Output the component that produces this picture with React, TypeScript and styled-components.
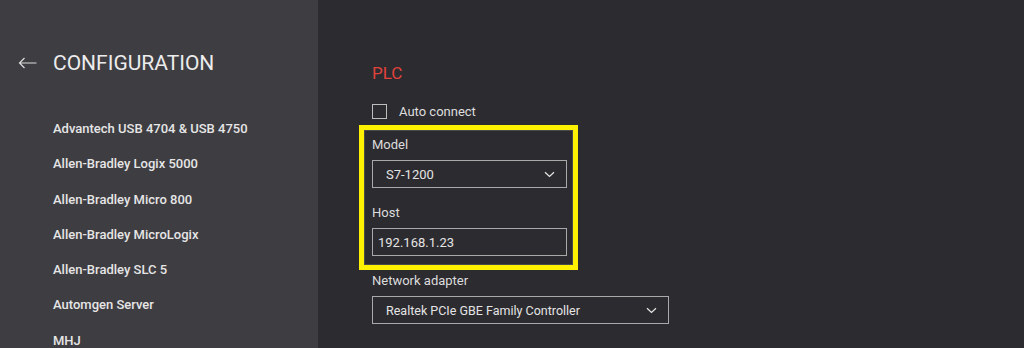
import React from "react";
import styled, {createGlobalStyle} from "styled-components";

const GlobalStyle = createGlobalStyle`
    html, body {
        margin: 0;
        padding: 0;
        background: #2c2b30;
        font-family: Roboto, "Liberation Sans", sans-serif;
    }
`;

const Page = styled.div`
    display: flex;
    width: 1024px;
    height: 348px;
    overflow: hidden;
    background: #2c2b30;
`;

const Sidebar = styled.aside`
    width: 318px;
    flex-shrink: 0;
    background: #3e3d42;
    padding: 52px 0 0 18px;
    box-sizing: border-box;
`;

const Header = styled.div`
    display: flex;
    align-items: center;
    height: 22px;
    color: #ececec;
    font-size: 21px;
    svg {
        margin-right: 16px;
    }
`;

const List = styled.ul`
    list-style: none;
    margin: 47px 0 0 35px;
    padding: 0;
`;

const Item = styled.li`
    color: #e6e6e6;
    font-size: 13px;
    font-weight: 500;
    height: 35.3px;
    line-height: 15px;
`;

const Main = styled.main`
    flex: 1;
    padding: 64px 0 0 54px;
`;

const Title = styled.h2`
    margin: 0;
    color: #e0433c;
    font-size: 17px;
    font-weight: 400;
    line-height: 18px;
`;

const CheckRow = styled.label`
    display: flex;
    align-items: center;
    margin-top: 21px;
    color: #dedede;
    font-size: 13px;
    height: 16px;
`;

const Box = styled.span`
    width: 13px;
    height: 13px;
    border: 1.5px solid #bdbdbd;
    margin-right: 12px;
`;

const Highlight = styled.div`
    width: 209px;
    margin: 6px 0 0 -13px;
    border: 5px solid #fff200;
    box-sizing: content-box;
`;

const HighlightInner = styled.div`
    border: 1px solid #4a4a4a;
    padding: 6px 6px 8px 7px;
`;

const Field = styled.div<{ $top?: number }>`
    margin-top: ${props => props.$top || 0}px;
`;

const Label = styled.div`
    color: #dcdcdc;
    font-size: 13px;
    line-height: 15px;
    margin-bottom: 8px;
`;

const Control = styled.div<{ $width: number; $size?: number }>`
    display: flex;
    align-items: center;
    justify-content: space-between;
    width: ${props => props.$width}px;
    height: 28px;
    box-sizing: border-box;
    border: 1px solid #a9a9a9;
    color: #e4e4e4;
    font-size: ${props => props.$size || 13}px;
    padding: 0 11px 0 13px;
`;

const HostControl = styled(Control)`
    padding-left: 5px;
`;

const Chevron = () => (
    <svg width="11" height="7" viewBox="0 0 11 7" fill="none">
        <path d="M1 1.2L5.5 5.5L10 1.2" stroke="#e6e6e6" strokeWidth="1.2"/>
    </svg>
);

const BackArrow = () => (
    <svg width="19" height="12" viewBox="0 0 19 12" fill="none">
        <path d="M18.5 6H1.5M6.5 1L1.5 6L6.5 11" stroke="#dcdcdc" strokeWidth="1.2"/>
    </svg>
);

const drivers = [
    "Advantech USB 4704 & USB 4750",
    "Allen-Bradley Logix 5000",
    "Allen-Bradley Micro 800",
    "Allen-Bradley MicroLogix",
    "Allen-Bradley SLC 5",
    "Automgen Server",
    "MHJ",
];

const App = () => {
    return (
        <Page>
            <GlobalStyle/>
            <Sidebar>
                <Header>
                    <BackArrow/>
                    <span>CONFIGURATION</span>
                </Header>
                <List>
                    {drivers.map(d => <Item key={d}>{d}</Item>)}
                </List>
            </Sidebar>
            <Main>
                <Title>PLC</Title>
                <CheckRow>
                    <Box/>
                    <span>Auto connect</span>
                </CheckRow>
                <Highlight>
                    <HighlightInner>
                        <Field>
                            <Label>Model</Label>
                            <Control $width={195}>
                                <span>S7-1200</span>
                                <Chevron/>
                            </Control>
                        </Field>
                        <Field $top={17}>
                            <Label>Host</Label>
                            <HostControl $width={195}>
                                <span>192.168.1.23</span>
                            </HostControl>
                        </Field>
                    </HighlightInner>
                </Highlight>
                <Field $top={3}>
                    <Label>Network adapter</Label>
                    <Control $width={297} $size={12.5}>
                        <span>Realtek PCIe GBE Family Controller</span>
                        <Chevron/>
                    </Control>
                </Field>
            </Main>
        </Page>
    );
};

export default App;
